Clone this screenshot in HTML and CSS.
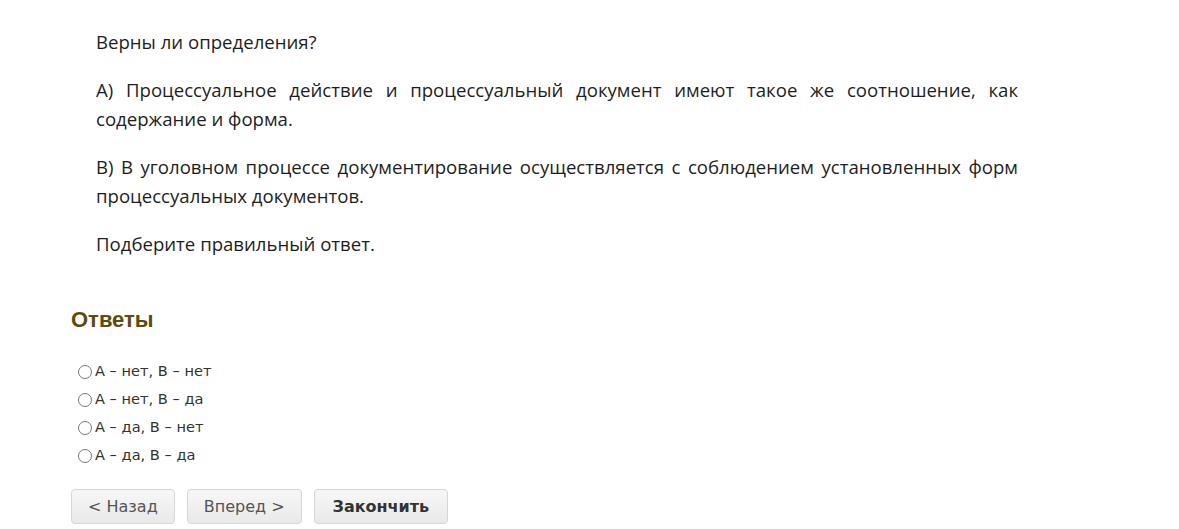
FILE: index.html
```html
<!DOCTYPE html>
<html lang="ru">
<head>
    <meta charset="UTF-8">
    <title>Тест</title>
    <link rel="stylesheet" href="styles.css">
</head>
<body>
    <div class="page">
        <div class="question">
            <p>Верны ли определения?</p>
            <p>А) Процессуальное действие и процессуальный документ имеют такое же соотношение, как содержание и форма.</p>
            <p>В) В уголовном процессе документирование осуществляется с соблюдением установленных форм процессуальных документов.</p>
            <p>Подберите правильный ответ.</p>
        </div>

        <h2 class="answers-title">Ответы</h2>
        <div class="answers">
            <label class="answer"><input type="radio" name="ans">А – нет, В – нет</label>
            <label class="answer"><input type="radio" name="ans">А – нет, В – да</label>
            <label class="answer"><input type="radio" name="ans">А – да, В – нет</label>
            <label class="answer"><input type="radio" name="ans">А – да, В – да</label>
        </div>

        <div class="nav">
            <button class="btn">&lt; Назад</button>
            <button class="btn">Вперед &gt;</button>
            <button class="btn btn-finish">Закончить</button>
        </div>
    </div>
</body>
</html>
```

FILE: styles.css
```css
body {
    margin: 0;
    background: #fff;
    font-family: 'Open Sans', Arial, sans-serif;
    color: #222;
}
.page {
    padding: 0 0 0 71px;
}
.question {
    width: 922px;
    padding: 27px 0 0 25px;
    font-size: 18.6px;
    line-height: 29px;
    color: #1e1e1e;
    text-align: justify;
}
.question p {
    margin: 0 0 19px 0;
}
.answers-title {
    margin: 49px 0 0 0;
    font-family: 'Liberation Sans', Arial, sans-serif;
    font-size: 22px;
    font-weight: bold;
    color: #5e4b0b;
}
.answers {
    margin-top: 28px;
    display: flex;
    flex-direction: column;
    gap: 8px;
}
.answer {
    display: flex;
    align-items: center;
    font-size: 14.6px;
    line-height: 20px;
    color: #34342a;
    font-family: 'DejaVu Sans', Verdana, sans-serif;
}
.answer input {
    margin: 2px 3px 0 7px;
    width: 14px;
    height: 14px;
}
.nav {
    margin-top: 24px;
    display: flex;
    gap: 12px;
}
.btn {
    height: 35px;
    padding: 0 16px;
    background: linear-gradient(#f7f7f7, #e9e9e9);
    border: 1px solid #d6d6d6;
    border-radius: 4px;
    font-family: 'DejaVu Sans', Verdana, sans-serif;
    font-size: 16px;
    color: #555;
}
.btn-finish {
    padding: 0 18px;
    font-weight: bold;
    color: #333;
}
```
